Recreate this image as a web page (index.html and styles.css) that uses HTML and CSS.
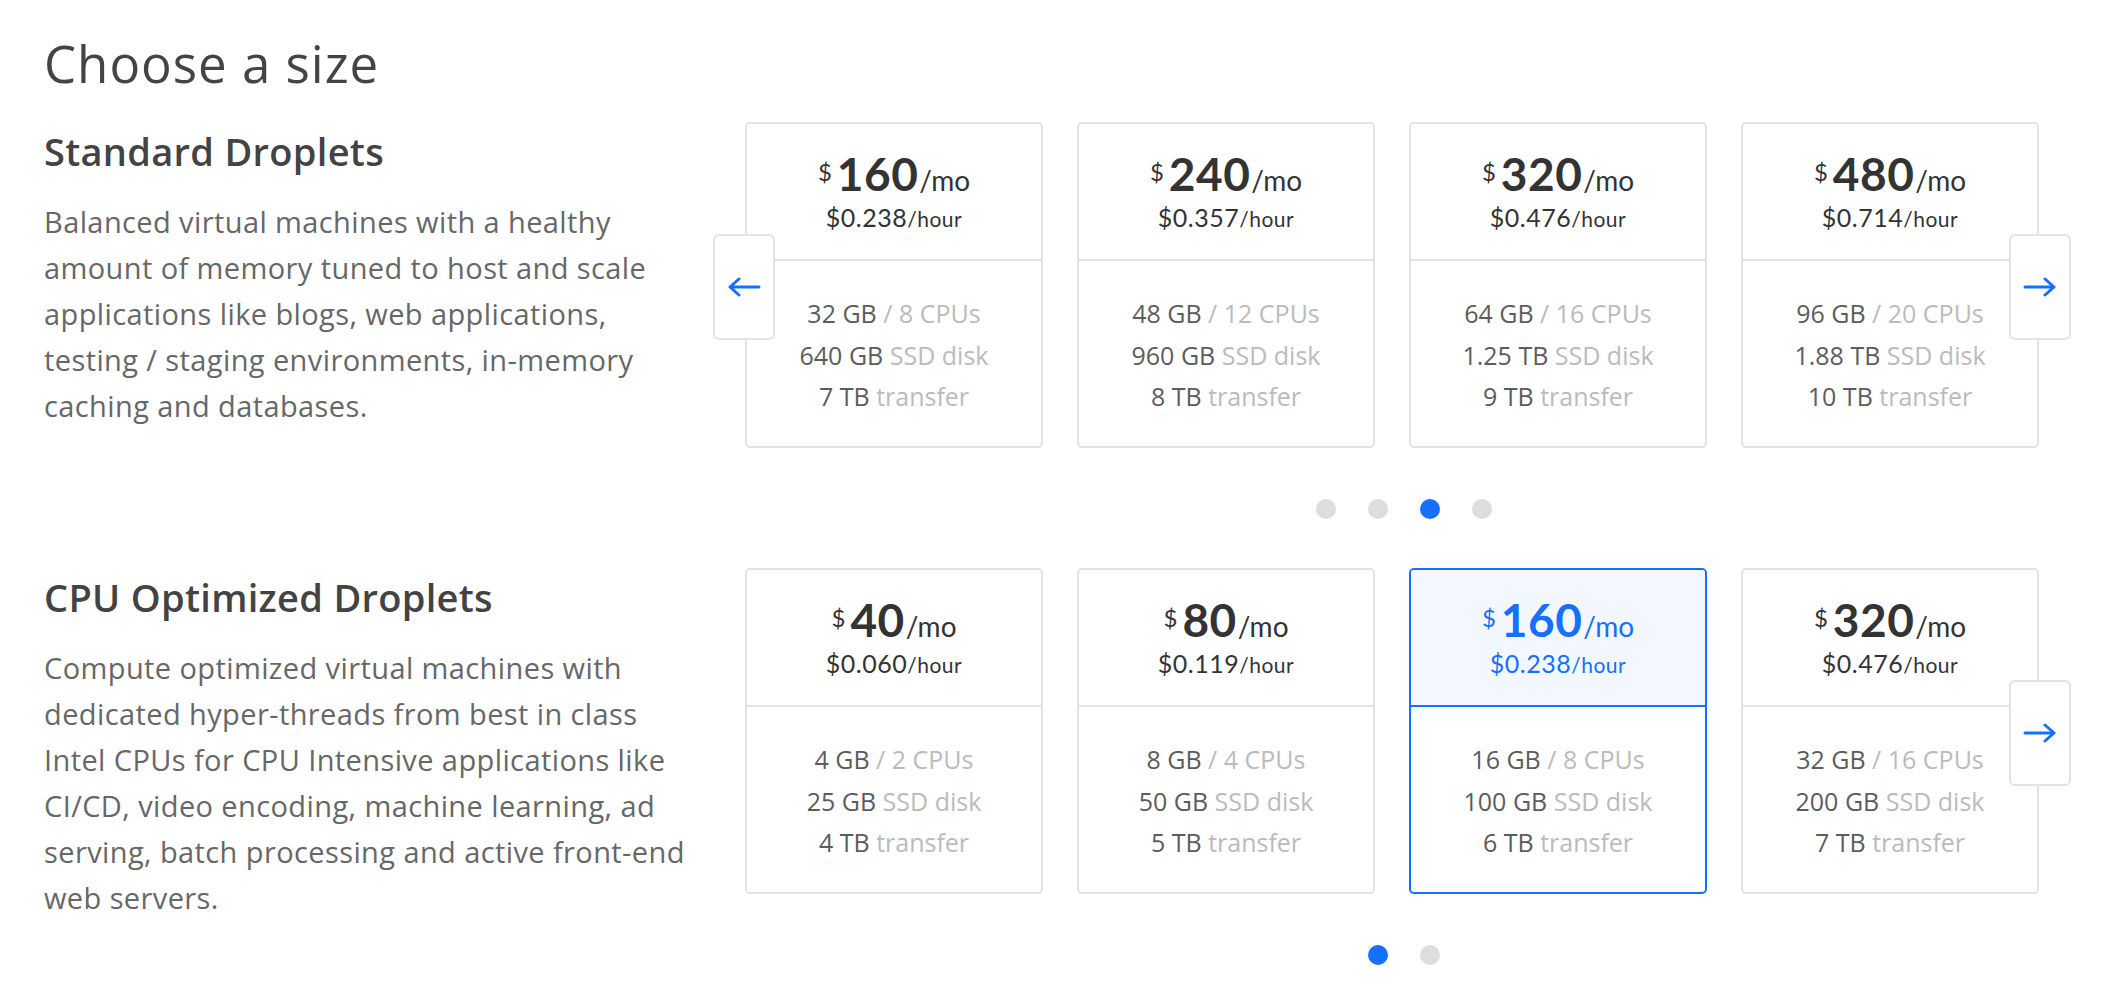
FILE: index.html
```html
<!DOCTYPE html>
<html lang="en">
  <head>
    <meta charset="UTF-8" />
    <meta name="viewport" content="width=device-width, initial-scale=1.0" />
    <title>Choose a size</title>
    <link rel="stylesheet" href="styles.css">
  </head>
  <body>
    <div class="page">
      <h1 class="page-title">Choose a size</h1>

      <!-- Standard -->
      <section class="size-group">
        <div class="group-info">
          <h2>Standard Droplets</h2>
          <p>
            Balanced virtual machines with a healthy<br />
            amount of memory tuned to host and scale<br />
            applications like blogs, web applications,<br />
            testing / staging environments, in-memory<br />
            caching and databases.
          </p>
        </div>
        <div class="group-plans">
          <div class="carousel">
            <button class="nav nav-prev" aria-label="Previous">
              <svg width="34" height="20" viewBox="0 0 34 20"><path d="M32 10H3M12 2L3 10l9 8" /></svg>
            </button>
            <div class="plan">
              <div class="plan-head">
                <div class="price"><span class="cur">$</span><span class="amount">160</span><span class="per">/mo</span></div>
                <div class="hourly">$0.238<small>/hour</small></div>
              </div>
              <div class="plan-specs">
                <div>32 GB <span>/ 8 CPUs</span></div>
                <div>640 GB <span>SSD disk</span></div>
                <div>7 TB <span>transfer</span></div>
              </div>
            </div>
            <div class="plan">
              <div class="plan-head">
                <div class="price"><span class="cur">$</span><span class="amount">240</span><span class="per">/mo</span></div>
                <div class="hourly">$0.357<small>/hour</small></div>
              </div>
              <div class="plan-specs">
                <div>48 GB <span>/ 12 CPUs</span></div>
                <div>960 GB <span>SSD disk</span></div>
                <div>8 TB <span>transfer</span></div>
              </div>
            </div>
            <div class="plan">
              <div class="plan-head">
                <div class="price"><span class="cur">$</span><span class="amount">320</span><span class="per">/mo</span></div>
                <div class="hourly">$0.476<small>/hour</small></div>
              </div>
              <div class="plan-specs">
                <div>64 GB <span>/ 16 CPUs</span></div>
                <div>1.25 TB <span>SSD disk</span></div>
                <div>9 TB <span>transfer</span></div>
              </div>
            </div>
            <div class="plan">
              <div class="plan-head">
                <div class="price"><span class="cur">$</span><span class="amount">480</span><span class="per">/mo</span></div>
                <div class="hourly">$0.714<small>/hour</small></div>
              </div>
              <div class="plan-specs">
                <div>96 GB <span>/ 20 CPUs</span></div>
                <div>1.88 TB <span>SSD disk</span></div>
                <div>10 TB <span>transfer</span></div>
              </div>
            </div>
            <button class="nav nav-next" aria-label="Next">
              <svg width="34" height="20" viewBox="0 0 34 20"><path d="M2 10h29M22 2l9 8-9 8" /></svg>
            </button>
          </div>
          <div class="dots">
            <span></span>
            <span></span>
            <span class="active"></span>
            <span></span>
          </div>
        </div>
      </section>

      <!-- CPU Optimized -->
      <section class="size-group">
        <div class="group-info">
          <h2>CPU Optimized Droplets</h2>
          <p>
            Compute optimized virtual machines with<br />
            dedicated hyper-threads from best in class<br />
            Intel CPUs for CPU Intensive applications like<br />
            CI/CD, video encoding, machine learning, ad<br />
            serving, batch processing and active front-end<br />
            web servers.
          </p>
        </div>
        <div class="group-plans">
          <div class="carousel">
            <div class="plan">
              <div class="plan-head">
                <div class="price"><span class="cur">$</span><span class="amount">40</span><span class="per">/mo</span></div>
                <div class="hourly">$0.060<small>/hour</small></div>
              </div>
              <div class="plan-specs">
                <div>4 GB <span>/ 2 CPUs</span></div>
                <div>25 GB <span>SSD disk</span></div>
                <div>4 TB <span>transfer</span></div>
              </div>
            </div>
            <div class="plan">
              <div class="plan-head">
                <div class="price"><span class="cur">$</span><span class="amount">80</span><span class="per">/mo</span></div>
                <div class="hourly">$0.119<small>/hour</small></div>
              </div>
              <div class="plan-specs">
                <div>8 GB <span>/ 4 CPUs</span></div>
                <div>50 GB <span>SSD disk</span></div>
                <div>5 TB <span>transfer</span></div>
              </div>
            </div>
            <div class="plan selected">
              <div class="plan-head">
                <div class="price"><span class="cur">$</span><span class="amount">160</span><span class="per">/mo</span></div>
                <div class="hourly">$0.238<small>/hour</small></div>
              </div>
              <div class="plan-specs">
                <div>16 GB <span>/ 8 CPUs</span></div>
                <div>100 GB <span>SSD disk</span></div>
                <div>6 TB <span>transfer</span></div>
              </div>
            </div>
            <div class="plan">
              <div class="plan-head">
                <div class="price"><span class="cur">$</span><span class="amount">320</span><span class="per">/mo</span></div>
                <div class="hourly">$0.476<small>/hour</small></div>
              </div>
              <div class="plan-specs">
                <div>32 GB <span>/ 16 CPUs</span></div>
                <div>200 GB <span>SSD disk</span></div>
                <div>7 TB <span>transfer</span></div>
              </div>
            </div>
            <button class="nav nav-next" aria-label="Next">
              <svg width="34" height="20" viewBox="0 0 34 20"><path d="M2 10h29M22 2l9 8-9 8" /></svg>
            </button>
          </div>
          <div class="dots">
            <span class="active"></span>
            <span></span>
          </div>
        </div>
      </section>
    </div>
  </body>
</html>
```

FILE: styles.css
```css
/* Reset */
* {
  box-sizing: border-box;
  margin: 0;
  padding: 0;
}

body {
  font-family: "Open Sans", "Lato", sans-serif;
  background: #fff;
  color: #444;
}

.page {
  padding: 33px 0 0 44px;
}

.page-title {
  font-size: 51px;
  font-weight: 400;
  line-height: 1.2;
  letter-spacing: 1px;
  color: #444;
  margin-bottom: 28px;
}

/* Size groups */
.size-group {
  display: grid;
  grid-template-columns: 660px 1294px;
  column-gap: 41px;
}

.size-group + .size-group {
  margin-top: 49px;
}

.group-info {
  padding-top: 7px;
}

.group-info h2 {
  font-size: 38px;
  font-weight: 600;
  line-height: 1.2;
  letter-spacing: 0.3px;
  color: #434343;
}

.group-info p {
  margin-top: 24px;
  font-size: 29px;
  line-height: 46px;
  letter-spacing: 0.4px;
  color: #676767;
  white-space: nowrap;
}

/* Plan cards */
.carousel {
  position: relative;
  display: grid;
  grid-template-columns: repeat(4, 1fr);
  column-gap: 34px;
}

.plan {
  height: 326px;
  border: 2px solid #e3e3e3;
  border-radius: 5px;
  overflow: hidden;
  text-align: center;
  background: #fff;
}

.plan-head {
  height: 137px;
  padding-top: 27px;
  border-bottom: 2px solid #e3e3e3;
  font-family: "Lato", "Open Sans", sans-serif;
}

.price {
  display: flex;
  justify-content: center;
  align-items: baseline;
  line-height: 1;
  color: #333;
}

.price .cur {
  align-self: flex-start;
  font-size: 24px;
  margin-top: 9px;
  margin-right: 5px;
}

.price .amount {
  font-size: 46px;
  font-weight: 700;
  letter-spacing: 0.5px;
}

.price .per {
  font-size: 28px;
  margin-left: 1px;
}

.hourly {
  margin-top: 5px;
  font-size: 25px;
  line-height: 30px;
  letter-spacing: 0.5px;
  color: #333;
}

.hourly small {
  font-size: 21px;
}

.plan-specs {
  padding-top: 32px;
  font-size: 25px;
  line-height: 41.5px;
  color: #5c5c5c;
}

.plan-specs span {
  color: #bbb;
}

/* Selected plan */
.plan.selected {
  border-color: #1570ff;
}

.plan.selected .plan-head {
  background: #f3f7ff;
  border-bottom-color: #1570ff;
}

.plan.selected .price,
.plan.selected .hourly {
  color: #1570ff;
}

/* Carousel arrows */
.nav {
  position: absolute;
  top: 112px;
  width: 62px;
  height: 106px;
  display: flex;
  align-items: center;
  justify-content: center;
  background: #fff;
  border: 2px solid #e3e3e3;
  border-radius: 6px;
  cursor: pointer;
}

.nav svg {
  fill: none;
  stroke: #1570ff;
  stroke-width: 3;
  stroke-linecap: round;
  stroke-linejoin: round;
}

.nav-prev {
  left: -32px;
}

.nav-next {
  right: -32px;
}

/* Pager dots */
.dots {
  display: flex;
  justify-content: center;
  gap: 32px;
  margin-top: 51px;
  padding-left: 24px;
}

.dots span {
  width: 20px;
  height: 20px;
  border-radius: 50%;
  background: #ddd;
}

.dots .active {
  background: #1570ff;
}
```
